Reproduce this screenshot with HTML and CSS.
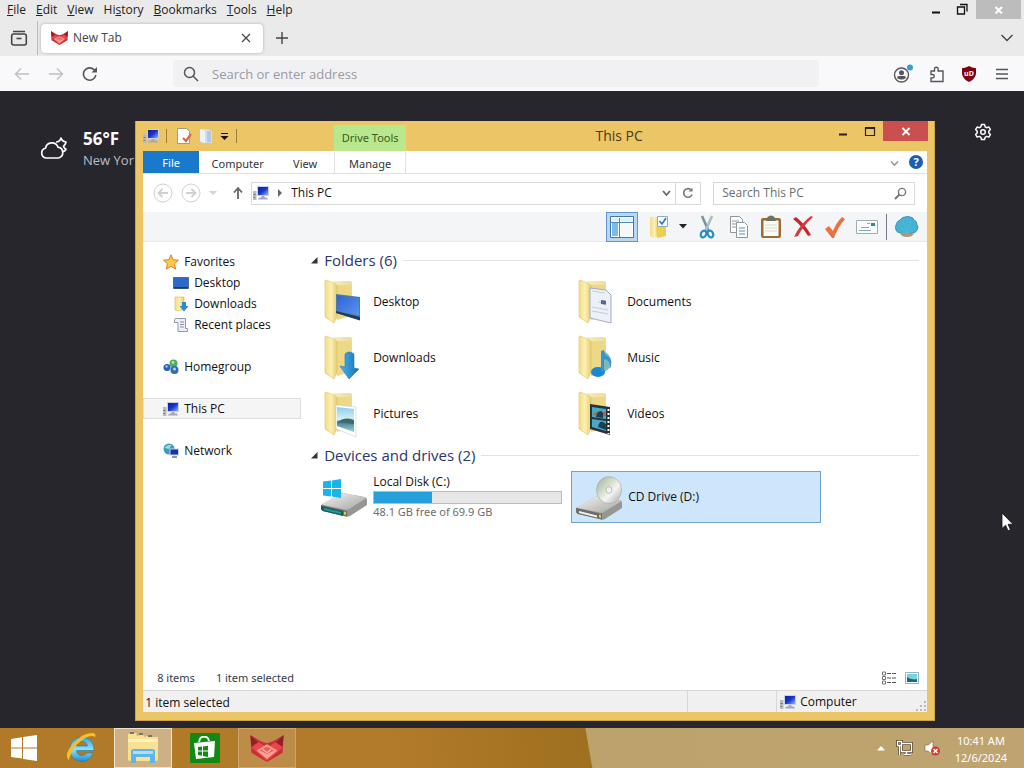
FILE: index.html
```html
<!DOCTYPE html>
<html lang="en">
<head>
<meta charset="utf-8">
<title>Desktop</title>
<link rel="stylesheet" href="styles.css">
</head>
<body>
<svg class="defs" width="0" height="0" aria-hidden="true">
  <defs>
    <linearGradient id="gScreen" x1="0" y1="0" x2="1" y2="1"><stop offset="0" stop-color="#0a1f9c"/><stop offset=".5" stop-color="#1a35cf"/><stop offset="1" stop-color="#8fb0f5"/></linearGradient>
    <linearGradient id="gFold" x1="0" y1="0" x2="1" y2="0"><stop offset="0" stop-color="#f3dc83"/><stop offset=".5" stop-color="#fbf0b4"/><stop offset="1" stop-color="#e8cc70"/></linearGradient>
    <linearGradient id="gFoldBack" x1="0" y1="0" x2="1" y2="1"><stop offset="0" stop-color="#f7efc2"/><stop offset="1" stop-color="#e6cd72"/></linearGradient>
    <linearGradient id="gBlue" x1="0" y1="0" x2="1" y2="1"><stop offset="0" stop-color="#2f62cf"/><stop offset="1" stop-color="#5a94f2"/></linearGradient>
    <linearGradient id="gArrow" x1="0" y1="0" x2="1" y2="0"><stop offset="0" stop-color="#47b4ee"/><stop offset="1" stop-color="#1471b8"/></linearGradient>
    <linearGradient id="gPic" x1="0" y1="0" x2="0" y2="1"><stop offset="0" stop-color="#8ccdf0"/><stop offset=".5" stop-color="#d8f0f7"/><stop offset=".6" stop-color="#3d7e8e"/><stop offset="1" stop-color="#9fd0dc"/></linearGradient>
    <linearGradient id="gMetal" x1="0" y1="0" x2="1" y2="1"><stop offset="0" stop-color="#f4f4f2"/><stop offset="1" stop-color="#a4a4a2"/></linearGradient>
    <linearGradient id="gDisc" x1="0" y1="0" x2="1" y2="1"><stop offset="0" stop-color="#a4a8a0"/><stop offset=".4" stop-color="#d3e0ca"/><stop offset=".6" stop-color="#f4f4f2"/><stop offset="1" stop-color="#a6aaa8"/></linearGradient>
    <linearGradient id="gIe" x1="0" y1="0" x2="0" y2="1"><stop offset="0" stop-color="#2da6e0"/><stop offset=".5" stop-color="#8fe0fa"/><stop offset="1" stop-color="#1b8fd0"/></linearGradient>
    <symbol id="pc" viewBox="0 0 16 16">
      <path d="M0 6h3.500v9H0z" fill="#b9b9c4"/><path d="M.5 9h2v1h-2zM.5 12h1.500v1H.5z" fill="#667d54"/>
      <path d="M4 1h12v10H4z" fill="#c8d0ea"/><path d="M5 2h10v8H5z" fill="url(#gScreen)"/>
      <path d="M8.500 11h3v1.500h-3zM6 12.500h8l1 2H5z" fill="#a4a8b8"/>
    </symbol>
    <symbol id="folder" viewBox="0 0 48 48">
      <path d="M13 3h17q2 0 2 2v32l-17 4z" fill="url(#gFoldBack)"/>
      <path d="M15 7h16v31l-14 4z" fill="#ecd887"/>
      <path d="M5 3q0-1 1-1l10 4q1 1 1 2v30l-3 7L5 39z" fill="url(#gFold)" stroke="#dfc266" stroke-width=".6"/>
    </symbol>
    <symbol id="fox" viewBox="0 0 32 26">
      <path d="M0 0l10 6 6 2 6-2L32 0l-1 17-15 9L1 17z" fill="#c62f39"/>
      <path d="M0 0l7 7-6 4zM32 0l-7 7 6 4z" fill="#8d2028"/>
      <path d="M1 12l7-5 8 5 8-5 7 5-15 13z" fill="#e9474b"/>
      <path d="M6 15l10-6 10 6-10 8z" fill="#f9a08f"/><path d="M9 15l7-4 7 4-7 3z" fill="#e8615d"/>
      <path d="M12 14l4 3 4-3" fill="none" stroke="#fbc3b4" stroke-width="1"/>
    </symbol>
    <symbol id="drive" viewBox="0 0 48 26">
      <path d="M1 14L20 3q2-1 4-.8L44 6q3 .6 3 3v5L30 25q-2 1-4 .4L3 20q-2-.6-2-3z" fill="#969694"/>
      <path d="M2 13L20 3q2-1 4-.8L44 6q2 1 1 2L29 18q-2 1-4 .6L3 14z" fill="url(#gMetal)"/>
      <path d="M1 14l26 6v5.500L3 20q-2-1-2-3z" fill="#6d6d68"/><path d="M4 17l18 4.400v2L4 19z" fill="#f2f2ef"/>
      <path d="M24 20.400l2 .5v3l-2-.5z" fill="#d9d13e"/>
    </symbol>
  </defs>
</svg>
<div class="desktop">
  <section class="browser">
    <header class="menubar">
      <nav class="menus">
        <button><u>F</u>ile</button><button><u>E</u>dit</button><button><u>V</u>iew</button><button>Hi<u>s</u>tory</button><button><u>B</u>ookmarks</button><button><u>T</u>ools</button><button><u>H</u>elp</button>
      </nav>
      <div class="caption">
        <button aria-label="Minimize"><svg width="10" height="18"><path d="M1 12.500h8" stroke="#111" stroke-width="2"/></svg></button>
        <button aria-label="Restore"><svg width="12" height="18"><path d="M1.500 7h7v7h-7zM4 4.500h7v7" fill="none" stroke="#111" stroke-width="1.300"/></svg></button>
        <button class="caption-close" aria-label="Close"><svg width="10" height="18"><path d="M1.500 6l6.500 6.500M8 6l-6.500 6.500" stroke="#fff" stroke-width="2"/></svg></button>
      </div>
    </header>
    <div class="tabs">
      <button class="tabview" aria-label="Firefox View"><svg width="18" height="18" fill="none" stroke="#444"><path d="M3 2.500h12" stroke-width="1.500"/><rect x="1.700" y="5" width="14.600" height="11" rx="2" stroke-width="1.600"/><path d="M6.500 9.500h5" stroke-width="1.600"/></svg></button>
      <div class="tab"><svg width="17" height="14"><use href="#fox"/></svg><span>New Tab</span><button aria-label="Close tab"><svg width="10" height="10"><path d="M1 1l8 8M9 1L1 9" stroke="#444" stroke-width="1.200"/></svg></button></div>
      <button class="newtab" aria-label="New tab"><svg width="14" height="14"><path d="M7 1v12M1 7h12" stroke="#444" stroke-width="1.400"/></svg></button>
      <button class="alltabs" aria-label="List all tabs"><svg width="14" height="10"><path d="M1.500 2L7 7.500 12.500 2" fill="none" stroke="#444" stroke-width="1.400"/></svg></button>
    </div>
    <div class="toolbar">
      <button aria-label="Back"><svg width="16" height="14"><path d="M15 7H1.500M7 1.500L1.500 7 7 12.500" fill="none" stroke="#bfbfc3" stroke-width="1.400"/></svg></button>
      <button aria-label="Forward"><svg width="16" height="14"><path d="M1 7h13.500M9 1.500L14.500 7 9 12.500" fill="none" stroke="#bfbfc3" stroke-width="1.400"/></svg></button>
      <button aria-label="Reload"><svg width="16" height="16"><path d="M13.800 9A6.200 6.200 0 1 1 12 3.600L14 5.500" fill="none" stroke="#55555b" stroke-width="1.600"/><path d="M15 1v5.500H9.500z" fill="#55555b"/></svg></button>
      <label class="urlbar"><svg width="16" height="16"><circle cx="6.500" cy="6.500" r="5" fill="none" stroke="#55555b" stroke-width="1.500"/><path d="M10 10l5 5" stroke="#55555b" stroke-width="1.500"/></svg><input type="text" aria-label="Address" placeholder="Search or enter address"></label>
      <div class="tools">
        <button aria-label="Account"><svg width="20" height="20"><circle cx="8.500" cy="11" r="7" fill="none" stroke="#55555b" stroke-width="1.400"/><circle cx="8.500" cy="8.800" r="2.500" fill="#55555b"/><path d="M4 14q0-2 2-2h5q2 0 2 2-4.500 3-9 0z" fill="#55555b"/><circle cx="17" cy="3.500" r="3" fill="#2ba3d6"/></svg></button>
        <button aria-label="Extensions"><svg width="16" height="18"><path d="M2 6h3.500V4a1.800 1.800 0 0 1 3.600 0v2H14v10.500H2V13h1.500a1.500 1.500 0 0 0 0-3.500H2z" fill="none" stroke="#55555b" stroke-width="1.400"/></svg></button>
        <button class="ublock" aria-label="uBlock Origin"><svg width="16" height="16"><path d="M8 0q3 2 7 2.200V8q-1 5-7 8Q2 13 1 8V2.200Q5 2 8 0z" fill="#800010"/></svg><span>uD</span></button>
        <button class="appmenu" aria-label="Menu"><svg width="14" height="14"><path d="M1 2.500h12M1 7h12M1 11.500h12" stroke="#55555b" stroke-width="1.300"/></svg></button>
      </div>
    </div>
    <main class="page">
      <div class="weather">
        <svg width="27" height="24" fill="#27262d" stroke="#fbfbfe" stroke-width="1.700" stroke-linejoin="round"><path d="M16 5q4 0 5-4 1 3.500 5 4-.5 3-2.500 4 1 3 2.500 3-1 3-4.500 2.500"/><path d="M6 21a5 5 0 0 1-.5-9.800 6.500 6.500 0 0 1 12.500-1 5.500 5.500 0 0 1 .5 10.800z"/></svg>
        <div><strong>56°F</strong><span>New Yor</span></div>
      </div>
      <button class="gear" aria-label="Personalize"><svg width="18" height="18" fill="none" stroke="#fbfbfe" stroke-width="1.500" stroke-linejoin="round"><path d="M7.500 1.500h3l.6 2.300 1.500.9 2.300-.7 1.500 2.600L14.800 8.300v1.600l1.600 1.600-1.500 2.600-2.300-.7-1.500.9-.6 2.200h-3l-.6-2.200-1.500-.9-2.300.7-1.500-2.600 1.600-1.600V8.300L1.600 6.600 3.100 4l2.300.7 1.500-.9z"/><circle cx="9" cy="9" r="2.300"/></svg></button>
    </main>
  </section>

  <section class="explorer">
    <header class="titlebar">
      <div class="qat">
        <svg width="16" height="16"><use href="#pc"/></svg><i class="bar"></i>
        <button aria-label="Properties"><svg width="16" height="16"><path d="M1.500.5h9l3 3v12h-12z" fill="#fdfcf8" stroke="#a59a82"/><path d="M7 10l3 3 5-7" fill="none" stroke="#dc6a50" stroke-width="2.200"/></svg></button>
        <button aria-label="New folder"><svg width="14" height="16"><path d="M1 1h8l4 2v12H3l-2-2z" fill="#d4deee"/><path d="M1 1l5 2v12l-5-2z" fill="#eef3fb"/><path d="M8 3h4v11H8z" fill="#b4c7e4"/></svg></button>
        <button aria-label="Customize"><svg width="9" height="9"><path d="M1 1.500h7" stroke="#111"/><path d="M.5 4h8l-4 4z" fill="#111"/></svg></button><i class="bar"></i>
      </div>
      <div class="context">Drive Tools</div>
      <h1>This PC</h1>
      <div class="winbtns">
        <button aria-label="Minimize"><svg width="10" height="20"><path d="M1 13.500h8" stroke="#2a2210" stroke-width="2"/></svg></button>
        <button aria-label="Maximize"><svg width="12" height="20"><path d="M1.500 6.500h9v8h-9zM1 7.500h10" fill="none" stroke="#2a2210" stroke-width="1.200"/></svg></button>
        <button class="winclose" aria-label="Close"><svg width="10" height="20"><path d="M1.500 7l7 7M8.500 7l-7 7" stroke="#fff" stroke-width="1.800"/></svg></button>
      </div>
    </header>
    <nav class="ribbon">
      <button class="file">File</button><button class="computer">Computer</button><button class="view">View</button><button class="manage">Manage</button>
      <span class="fill"></span>
      <button aria-label="Expand ribbon"><svg width="9" height="7"><path d="M1 1.500L4.500 5 8 1.500" fill="none" stroke="#999" stroke-width="1.600"/></svg></button>
      <button class="help" aria-label="Help">?</button>
    </nav>
    <div class="addressrow">
      <button aria-label="Back"><svg width="20" height="20" fill="none" stroke="#d0d0d0"><circle cx="10" cy="10" r="9"/><path d="M15 10H5.500M9.500 6l-4 4 4 4" stroke-width="1.800"/></svg></button>
      <button aria-label="Forward"><svg width="20" height="20" fill="none" stroke="#d0d0d0"><circle cx="10" cy="10" r="9"/><path d="M5 10h9.500M10.500 6l4 4-4 4" stroke-width="1.800"/></svg></button>
      <button class="recent" aria-label="Recent locations"><svg width="8" height="5"><path d="M0 0h8L4 4z" fill="#d4d4d4"/></svg></button>
      <button class="up" aria-label="Up"><svg width="12" height="14"><path d="M6 13V2.500M2 6.500L6 2l4 4.500" fill="none" stroke="#666" stroke-width="1.800"/></svg></button>
      <div class="address">
        <svg width="16" height="16"><use href="#pc"/></svg><svg width="6" height="8"><path d="M1 0l4 4-4 4z" fill="#666"/></svg><span>This PC</span>
        <button class="history" aria-label="Previous locations"><svg width="9" height="7"><path d="M1 1l3.500 4L8 1" fill="none" stroke="#666" stroke-width="1.800"/></svg></button>
        <button class="refresh" aria-label="Refresh"><svg width="12" height="12"><path d="M10 7.500A4.300 4.300 0 1 1 8.500 2.500" fill="none" stroke="#777" stroke-width="1.600"/><path d="M6.500 4.500h4v-4z" fill="#777"/></svg></button>
      </div>
      <label class="search"><input type="text" aria-label="Search" placeholder="Search This PC"><svg width="13" height="13"><circle cx="8" cy="5" r="3.600" fill="none" stroke="#777" stroke-width="1.400"/><path d="M5.500 7.500L1 12" stroke="#777" stroke-width="2"/></svg></label>
    </div>
    <div class="iconbar">
      <button class="on" aria-label="Navigation pane"><svg width="24" height="24"><path d="M.5 1.500h23v21H.5z" fill="#fff" stroke="#3f78a8"/><path d="M2 3h20v3H2z" fill="#e3f0fa"/><path d="M2 8h6v13H2z" fill="#79bdec"/><path d="M9.500 3v19M1 7.500h22" stroke="#4b86b5"/><path d="M11 9h11v12H11z" fill="#f3f8fc"/></svg></button>
      <button class="gapped" aria-label="Options"><svg width="24" height="24"><path d="M3 2h9v19l-6 2-3-2z" fill="url(#gFold)"/><path d="M9 12h10v9l-9 2z" fill="#edcf4d"/><path d="M10.500 1.500h10v10h-10z" fill="#fff" stroke="#8caac4"/><path d="M12.500 6l2.500 3 4-6" fill="none" stroke="#2477bd" stroke-width="1.600"/></svg></button>
      <button class="caret" aria-label="More options"><svg width="8" height="5"><path d="M0 0h8L4 4.500z" fill="#222"/></svg></button>
      <button aria-label="Cut"><svg width="24" height="24" fill="none"><path d="M7 1l7 16" stroke="#78929c" stroke-width="2.500"/><path d="M17 1l-7 16" stroke="#a8bdc4" stroke-width="2.500"/><ellipse cx="8.500" cy="19" rx="2.600" ry="3.500" transform="rotate(25 8.500 19)" stroke="#278bc8" stroke-width="2.200"/><ellipse cx="15.500" cy="19" rx="2.600" ry="3.500" transform="rotate(-25 15.500 19)" stroke="#278bc8" stroke-width="2.200"/></svg></button>
      <button aria-label="Copy"><svg width="24" height="24" fill="#fff" stroke="#8f979c"><path d="M3.500 1.500h9l3 3v13h-12z"/><path d="M5 6h7M5 9h7M5 12h7" /><path d="M9.500 7.500h8l3 3v12h-11z"/><path d="M12 13h6M12 16h6M12 19h6" stroke="#5b91ab"/></svg></button>
      <button aria-label="Paste"><svg width="24" height="24"><rect x="2" y="3" width="20" height="20" rx="2" fill="#9b6c35"/><path d="M4.500 5.500h15v15.500h-15z" fill="#fbfbf6"/><path d="M8 3.500q0-2 4-3 4 1 4 3l1 2.500H7z" fill="#6f7064"/><path d="M6 10h12M6 13h12M6 16h12" stroke="#d8d8cc"/></svg></button>
      <button aria-label="Delete"><svg width="24" height="24"><path d="M2 4l3-2q9 7 15 18l-3 1Q11 11 2 4z" fill="#c4282c"/><path d="M20 1l2 1Q12 11 7 21l-4 1Q9 9 20 1z" fill="#d9373a"/></svg></button>
      <button aria-label="Rename"><svg width="24" height="24"><path d="M2 14l4-3 4 5Q13 8 19 2l3 2Q15 12 11 23H9z" fill="#e9733f"/></svg></button>
      <button aria-label="E-mail"><svg width="24" height="24"><path d="M1.500 5.500h21v13h-21z" fill="#fafcfc" stroke="#a2adb2"/><path d="M16 8h4v3h-4z" fill="#2c8f97"/><path d="M12 8.500h3M6 12.500h8M4 15.500h12" stroke="#80aab8"/></svg></button>
      <i class="bar"></i>
      <button aria-label="Classic Shell"><svg width="24" height="24"><path d="M1 10q1-4 4-5 2-3 5-3 3-1 5 0 3 0 4 3 3 1 3 5 2 2 0 5-1 3-5 3-2 3-6 3-3 0-5-3-4 0-5-3-1-3 0-5z" fill="#45b1d4" stroke="#3796b8"/><path d="M12 19L8 5M12 19V4M12 19l4-14M12 19L4 10M12 19l8-9" stroke="#50bad8"/><path d="M5 18q7 2 14 0-1 4-7 4t-7-4z" fill="#bb9475"/></svg></button>
    </div>
    <div class="body">
      <nav class="tree">
        <a href="#"><svg width="16" height="16"><path d="M8 .8l2.100 4.900 5.400.5-4 3.600 1.200 5.300L8 12.300l-4.700 2.800 1.200-5.300-4-3.600 5.400-.5z" fill="#fdc94c" stroke="#d97f2e"/></svg>Favorites</a>
        <a class="sub" href="#"><svg width="16" height="16"><path d="M.5 2.500h15v11H.5z" fill="#2c69c9" stroke="#4e6d91"/><path d="M1 12h14v1.500H1z" fill="#1e3a62"/></svg>Desktop</a>
        <a class="sub" href="#"><svg width="16" height="16"><path d="M2 1h9v12l-5 2-4-1z" fill="url(#gFold)" stroke="#d8bc54" stroke-width=".6"/><path d="M9 6h4v4h2.500L11 15.500 6.500 10H9z" fill="#2a8ccf"/></svg>Downloads</a>
        <a class="sub" href="#"><svg width="16" height="16"><path d="M3.500 1.500h9v10h2v3H5v-9H1.500v-3q0-1 2-1z" fill="#eef0f4" stroke="#9298a8"/><path d="M7 5h4M7 7.500h4M7 10h4" stroke="#8890a8"/></svg>Recent places</a>
        <a class="group" href="#"><svg width="16" height="16"><circle cx="4" cy="8.500" r="3.500" fill="#2d5fb8"/><circle cx="10.500" cy="4.500" r="4" fill="#4fae5c"/><circle cx="11.500" cy="11" r="4" fill="#2f6ea8"/><circle cx="3.500" cy="7.500" r="1.200" fill="#a9c5ef"/><circle cx="10" cy="3.500" r="1.400" fill="#b9e3b0"/><circle cx="11.500" cy="10" r="1.500" fill="#a6d8d4"/></svg>Homegroup</a>
        <a class="group selected" href="#"><svg width="16" height="16"><use href="#pc"/></svg>This PC</a>
        <a class="group" href="#"><svg width="16" height="16"><circle cx="6" cy="6" r="5.500" fill="#3b9cb8"/><path d="M1.500 5q3-4 7-3L6 6z" fill="#a5d8df"/><path d="M6.500 5.500H16v7H6.500z" fill="#c8d0ea"/><path d="M7.500 6.500H15v5H7.500z" fill="#1432ad"/><path d="M9 13h5v2H9z" fill="#8b95ad"/></svg>Network</a>
      </nav>
      <div class="files">
        <h2><svg width="7" height="7"><path d="M6.500 0v6.500H0z" fill="#333"/></svg><span>Folders (6)</span></h2>
        <div class="grid">
          <a class="item" href="#"><svg width="48" height="48"><use href="#folder"/><path d="M16 16l24 3v23l-24-7z" fill="#54799f"/><path d="M17 17.500l22 2.700v17L17 33z" fill="url(#gBlue)"/><path d="M16 33l24 6v3.500L16 35z" fill="#203e54"/></svg><span>Desktop</span></a>
          <a class="item" href="#"><svg width="48" height="48"><use href="#folder"/><path d="M16 10l16 2 5 5v28l-21-5z" fill="#edf0f7" stroke="#a5acc4"/><path d="M18 13l13 2M24 24l8 1M18 29l16 3M18 33l16 3" stroke="#c4cbd9"/><path d="M27 22l5 .7v4l-5-.7z" fill="#4b6c8c"/></svg><span>Documents</span></a>
          <a class="item" href="#"><svg width="48" height="48"><use href="#folder"/><path d="M25 20q4-4 9 0v14l5 1-10 10-9-13 5 1z" fill="url(#gArrow)" stroke="#2877ad" stroke-width=".6"/></svg><span>Downloads</span></a>
          <a class="item" href="#"><svg width="48" height="48"><use href="#folder"/><path d="M30 17q9 5 7 16l-8 6z" fill="#7fb9b0"/><ellipse cx="24" cy="38" rx="7" ry="5" fill="#1d86d2"/><path d="M27 38V17l3-1q0 5 5 7 4 5 1 11 1-8-6-9v12z" fill="#3295d8"/></svg><span>Music</span></a>
          <a class="item" href="#"><svg width="48" height="48"><use href="#folder"/><path d="M16 15l20 2v30l-20-8z" fill="#fff" stroke="#c8cdd0" stroke-width=".6"/><path d="M17 17l17 2v23l-17-6z" fill="url(#gPic)"/><path d="M17 33q7-7 17-3v4l-17-2z" fill="#40696b"/></svg><span>Pictures</span></a>
          <a class="item" href="#"><svg width="48" height="48"><use href="#folder"/><path d="M16 14l20 3v28l-20-6z" fill="#26343a"/><path d="M18 17l14 2v10l-14-2zM18 29l14 2v10l-14-4z" fill="#48a8c8"/><path d="M19 24l5-3 4 2 4-2v5l-13-1z" fill="#a86a46"/><path d="M22 27q1-6 5-6 3 1 2 7z" fill="#1f3e4f"/><path d="M24 37q1-6 5-5l3 2v6z" fill="#1f3e4f"/><path d="M34.500 19v25" stroke="#fff" stroke-width="2" stroke-dasharray="2 2"/></svg><span>Videos</span></a>
        </div>
        <h2><svg width="7" height="7"><path d="M6.500 0v6.500H0z" fill="#333"/></svg><span>Devices and drives (2)</span></h2>
        <div class="grid drives">
          <a class="item" href="#"><svg width="48" height="48"><use href="#drive" x="0" y="18" width="48" height="26"/><path d="M1 33l22 5v5L3 38q-2-1-2-3z" fill="#155e5c"/><path d="M4 35l17 4v2L4 37z" fill="#2a9a95"/><path d="M3 8.500l8-1V15H3zM12 7.400L21 6v9h-9zM3 16h8v7.500l-8-1zM12 16h9v9l-9-1.400z" fill="#19b5ea"/></svg><span class="details"><span>Local Disk (C:)</span><progress max="69.9" value="21.8" aria-label="Space used"></progress><small>48.1 GB free of 69.9 GB</small></span></a>
          <a class="item chosen" href="#"><svg width="48" height="48"><use href="#drive" x="0" y="21" width="48" height="26"/><ellipse cx="34" cy="17" rx="12.500" ry="13.500" fill="url(#gDisc)" stroke="#a0a6a4" stroke-width=".6"/><ellipse cx="34" cy="17" rx="3" ry="3.300" fill="#eef2f2" stroke="#9aa09e" stroke-width=".6"/></svg><span>CD Drive (D:)</span></a>
        </div>
      </div>
    </div>
    <div class="summary"><span>8 items</span><span>1 item selected</span>
      <div class="views"><button aria-label="Details"><svg width="16" height="14"><path d="M1.500 1h3v3h-3zM1.500 5.500h3v3h-3zM1.500 10h3v3h-3z" fill="none" stroke="#777"/><path d="M6 2.500h4M11 2.500h4M6 7h4M11 7h4M6 11.500h4M11 11.500h4" stroke="#555"/></svg></button><button aria-label="Large icons"><svg width="14" height="14"><path d="M.5 1.500h13v11H.5z" fill="#fff" stroke="#8fb8c4"/><path d="M2 3h10v5H2z" fill="#7bd0e2"/><path d="M2 6q4 3 10 2v3H2z" fill="#176c79"/></svg></button></div>
    </div>
    <footer class="status"><span class="grow">1 item selected</span><span class="cell"></span><span class="zone"><svg width="16" height="16"><use href="#pc"/></svg>Computer<svg class="grip" width="10" height="10"><path d="M8 0h2v2H8zM8 4h2v2H8zM4 4h2v2H4zM8 8h2v2H8zM4 8h2v2H4zM0 8h2v2H0z" fill="#b8b8c0"/></svg></span></footer>
  </section>

  <footer class="taskbar">
    <button aria-label="Start"><svg width="28" height="28"><path d="M1 5l11-1.700V13.500H1zM13 3.100L27 1v12.500H13zM1 14.500h11v10L1 23zM13 14.500h14V27l-14-2z" fill="#fff"/></svg></button>
    <button aria-label="Internet Explorer"><svg width="32" height="32"><path d="M29 18.500H11.500q.5 5 5.500 5 3 0 4.500-2.500H28Q25 29.500 17 29.500 5 28.500 5 17 6 5 17 5q12 1 12 13.500zm-6.500-4.500q-1-4.500-5.500-4.500T11.500 14z" fill="url(#gIe)" fill-rule="evenodd" stroke="#157eb6" stroke-width=".6"/><path d="M4 28.500Q-2 23 8 12 18 0 28 1q4 1 2 4-5-3-14 4T6 22q-2 4-2 6.500z" fill="#fabd27"/></svg></button>
    <button class="active" aria-label="File Explorer"><svg width="32" height="32"><path d="M1 2l8-1 1 3 6-2 1 3 7-2v2h7v22q0 2-2 2H3q-2 0-2-2z" fill="#f6e195"/><path d="M1 7h30v3H1z" fill="#fff1b8"/><path d="M4 19q0-2 3-2h18q3 0 3 2v12h-5v-6H9v6H4z" fill="#60b5e8"/><path d="M6 19h20v3H6z" fill="#b3ddf5"/><path d="M3 1h4M12 2h4M21 4h4" stroke="#6e7b60" stroke-width="2"/></svg></button>
    <button aria-label="Store"><svg width="30" height="30"><path d="M0 0h30v30H0z" fill="#138a14"/><path d="M9 9q1-6 5-5 4-1 5 4" fill="none" stroke="#fff" stroke-width="1.800"/><path d="M4 10l21-2-1 16-18 2z" fill="#fff"/><path d="M8 14l4-.5v4H8zM13 13.400l5-.6v4.700h-5zM8 18.500h4v4.300L8 22zM13 18.500h5V24l-5-1z" fill="#138a14"/></svg></button>
    <button class="running" aria-label="Browser"><svg width="34" height="27"><use href="#fox"/></svg></button>
    <div class="tray">
      <button aria-label="Show hidden icons"><svg width="8" height="5"><path d="M4 0l4 4.500H0z" fill="#fff"/></svg></button>
      <button aria-label="Network"><svg width="17" height="16" fill="none"><path d="M5.500 3.500h10v8h-10zM8 14.500h7M10.500 12v2M1.500 1.500h4v4h-4zM3.500 6v9" stroke="#584a30" stroke-width="3"/><path d="M5.500 3.500h10v8h-10zM8 14.500h7M10.500 12v2M1.500 1.500h4v4h-4zM3.500 6v9" stroke="#fff" stroke-width="1.300"/></svg></button>
      <button aria-label="Volume muted"><svg width="17" height="16"><path d="M1 5h3l5-4v14l-5-4H1z" fill="#fff" stroke="#776342" stroke-width=".6"/><circle cx="11.500" cy="11" r="4.500" fill="#d33b2f"/><path d="M9.500 9l4 4M13.500 9l-4 4" stroke="#fff" stroke-width="1.500"/></svg></button>
      <time><span>10:41 AM</span><span>12/6/2024</span></time>
    </div>
  </footer>
  <svg class="pointer" width="12" height="20"><path d="M1 1v15.500l3.600-3.300 2.400 5.500 2.400-1-2.300-5.400H12z" fill="#fff" stroke="#111" stroke-width=".8"/></svg>
</div>
</body>
</html>
```
FILE: styles.css
```css
* { box-sizing: border-box; }
body { margin: 0; font: 12px/16px "Open Sans", "Noto Sans", sans-serif; color: #111; }
button { font: inherit; color: inherit; background: none; border: 0; padding: 0; display: flex; align-items: center; justify-content: center; }
input { font: inherit; border: 0; background: none; padding: 0; min-width: 0; flex: 1; outline: 0; }
a { color: inherit; text-decoration: none; }
svg { flex: none; display: block; }
.defs { position: absolute; }
.desktop { position: relative; display: flex; flex-direction: column; min-height: 100vh; overflow: hidden; }

.browser { flex: 1; display: flex; flex-direction: column; background: #eaeaea; }
.menubar { display: flex; justify-content: space-between; height: 20px; }
.menus { display: flex; gap: 10px; padding-left: 7px; color: #222; }
.caption { display: flex; align-items: flex-start; gap: 15px; }
.caption-close { width: 45px; height: 19px; margin: 0 3px 0 -7px; background: #bcbcbc; }
.tabs { display: flex; align-items: center; height: 36px; }
.tabview { width: 38px; height: 34px; border-right: 1px solid #bbb; }
.tab { display: flex; align-items: center; gap: 5px; width: 222px; height: 29px; margin-left: 3px; padding: 0 12px 0 10px; background: #fff; border-radius: 4px; box-shadow: 0 0 3px #aaa; color: #444; }
.tab span { flex: 1; }
.newtab { width: 37px; }
.alltabs { margin: 0 10px 0 auto; }
.toolbar { display: flex; align-items: center; gap: 18px; height: 35px; padding: 0 15px 0 14px; background: #f9f9fb; }
.urlbar { display: flex; align-items: center; gap: 13px; flex: 1; height: 27px; margin: 0 56px 0 57px; padding: 0 10px; background: #f1f1f4; border-radius: 4px; font-size: 13px; }
.urlbar input::placeholder { color: #9a9aa2; opacity: 1; }
.tools { display: flex; align-items: center; gap: 16px; }
.appmenu { margin-left: 2px; }
.ublock { position: relative; }
.ublock span { position: absolute; inset: 0; color: #fff; font-size: 7px; line-height: 15px; font-weight: 700; }
.page { flex: 1; display: flex; justify-content: space-between; align-items: flex-start; padding: 32px 32px 0 40px; background: #27262d; color: #fbfbfe; }
.weather { display: flex; align-items: center; gap: 16px; padding-top: 5px; }
.weather div { display: flex; flex-direction: column; }
.weather strong { font-size: 17px; line-height: 22px; }
.weather span { font-size: 13px; line-height: 20px; color: #bdbcc3; }

.explorer { position: absolute; left: 13.200%; top: 121px; width: 800px; height: 600px; display: flex; flex-direction: column; padding: 0 7px 8px; background: #ecc566; border: 1px solid #cba34a; border-top: 0; }
.titlebar { display: flex; height: 30px; flex: none; }
.qat { display: flex; align-items: center; gap: 7px; width: 191px; }
.bar { width: 1px; height: 14px; background: #9d7d36; }
.qat .bar { margin-right: 2px; }
.context { width: 72px; margin-top: 4px; background: #b9e78d; color: #3c5b1f; text-align: center; font: 11px/26px "Noto Sans", sans-serif; }
h1 { flex: 1; margin: 0; padding-right: 6px; text-align: center; font-size: 14px; line-height: 29px; font-weight: 400; color: #4a3a16; }
.winbtns { display: flex; align-items: flex-start; gap: 16px; margin-right: -1px; }
.winclose { width: 45px; height: 20px; background: #c9504e; margin-left: -9px; }
.ribbon { display: flex; flex: none; height: 23px; background: #fff; border-bottom: 1px solid #e2e2e2; color: #333; font: 11px/16px "Noto Sans", sans-serif; align-items: stretch; }
.ribbon button { padding-top: 3px; }
.ribbon .file { width: 56px; padding: 2px 0 0; background: #1979ca; color: #fff; }
.computer { width: 77px; }
.view { width: 58px; }
.manage { width: 72px; border: solid #e2e2e2; border-width: 0 1px; }
.fill { flex: 1; }
.ribbon .help { align-self: center; width: 14px; height: 14px; margin: 0 4px 0 10px; padding: 0; border-radius: 50%; background: #1b5fb4; color: #fff; font-weight: 700; }
.addressrow { display: flex; align-items: center; flex: none; height: 38px; padding: 0 12px 0 10px; background: #fff; }
.addressrow > button + button { margin-left: 8px; }
.addressrow > .recent + .up { margin-left: 15px; }
.address { display: flex; align-items: center; flex: 1; gap: 8px; height: 23px; margin-left: 7px; padding-left: 1px; border: 1px solid #d9d9d9; }
.address span { flex: 1; }
.history { margin-right: -4px; }
.refresh { width: 25px; height: 21px; border-left: 1px solid #d9d9d9; }
.search { display: flex; align-items: center; width: 202px; height: 23px; margin-left: 12px; padding: 0 7px 0 8px; border: 1px solid #d9d9d9; }
.search input::placeholder { color: #6d6d6d; opacity: 1; }
.iconbar { display: flex; flex: none; align-items: center; justify-content: flex-end; height: 30px; padding-right: 4px; background: #f4f5f6; border-bottom: 1px solid #e9e9ec; }
.iconbar button { width: 32px; height: 30px; }
.iconbar .on { background: #b9d7f7; border: 1px solid #6593cf; }
.iconbar .gapped { margin-left: 5px; }
.iconbar .caret { width: 16px; }
.iconbar .bar { height: 26px; margin: 0 4px 0 3px; background: #778; }
.body { display: flex; flex: 1; background: #fff; }
.tree { display: flex; flex-direction: column; width: 158px; padding-top: 9px; }
.tree a { display: flex; align-items: center; gap: 5px; height: 21px; padding-left: 20px; }
.tree .sub { padding-left: 30px; }
.tree .group { margin-top: 21px; }
.tree .selected { background: #f5f5f5; border: 1px solid #dedede; padding-left: 19px; }
.files { flex: 1; padding: 7px 8px 0 10px; }
h2 { display: flex; align-items: center; gap: 6px; margin: 0; font-size: 15px; line-height: 22px; font-weight: 400; color: #29366f; }
h2::after { content: ""; flex: 1; border-top: 1px solid #e3e3e6; }
.grid { display: grid; grid-template-columns: 250px 250px; column-gap: 4px; grid-auto-rows: 56px; margin: 3px 0 2px 6px; }
.item { display: flex; align-items: center; gap: 5px; padding-left: 3px; }
.grid.drives { grid-auto-rows: 52px; margin-top: 5px; }
.chosen { background: #cde6fc; border: 1px solid #6ea5cf; }
.details { display: flex; flex-direction: column; flex: 1; margin-right: 4px; }
.details small { font: 11px/16px "Noto Sans", sans-serif; color: #6d6d6d; }
progress { appearance: none; display: block; width: 189px; height: 13px; margin: 1px 0 0; border: 1px solid #bcbcbc; background: #e6e6e6; }
progress::-webkit-progress-bar { background: #e6e6e6; }
progress::-webkit-progress-value { background: #26a0da; }
.summary { display: flex; flex: none; align-items: center; gap: 21px; height: 24px; padding: 0 8px 0 14px; background: #fff; color: #333c50; font: 11px/16px "Noto Sans", sans-serif; }
.views { display: flex; gap: 8px; margin-left: auto; }
.status { display: flex; flex: none; height: 22px; background: #f0f0f0; border-top: 1px solid #d7d7d7; line-height: 24px; }
.grow { flex: 1; padding-left: 2px; }
.cell { width: 89px; border-left: 1px solid #d7d7d7; }
.zone { display: flex; align-items: center; gap: 4px; width: 151px; padding-left: 3px; border-left: 1px solid #d7d7d7; }
.grip { margin: auto 1px 1px auto; }

.taskbar { display: flex; flex: none; align-items: stretch; gap: 4px; height: 40px; background: linear-gradient(80deg, #b17a28 0, #b27b2a 38%, #9e701f 57.400%, #bda26c 57.500%, #bea470 100%); }
.taskbar > button { width: 58px; border: 1px solid transparent; }
.taskbar > button:first-child { width: 48px; }
.taskbar > .active { background: #cdb083; border-color: #efe3c8; }
.taskbar > .running { background: #bd8c49; border-color: #cda567; }
.tray { display: flex; align-items: center; gap: 11px; margin-left: auto; padding-right: 17px; color: #fff; }
time { display: flex; flex-direction: column; margin-left: 3px; font: 11px/17px "Noto Sans", sans-serif; text-align: center; padding-top: 2px; }
.pointer { position: absolute; left: 1001px; top: 512px; }
```
